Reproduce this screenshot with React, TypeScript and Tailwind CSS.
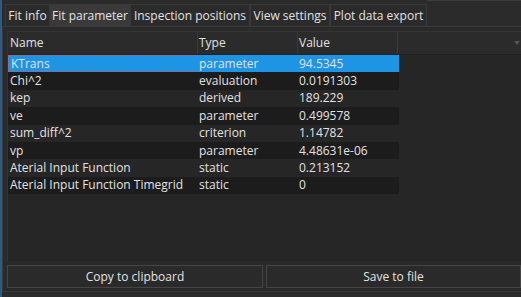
import React from "react";

const rows: [string, string, string][] = [
  ["KTrans", "parameter", "94.5345"],
  ["Chi^2", "evaluation", "0.0191303"],
  ["kep", "derived", "189.229"],
  ["ve", "parameter", "0.499578"],
  ["sum_diff^2", "criterion", "1.14782"],
  ["vp", "parameter", "4.48631e-06"],
  ["Aterial Input Function", "static", "0.213152"],
  ["Aterial Input Function Timegrid", "static", "0"],
];

const tabs: { label: string; w: string; sel?: boolean }[] = [
  { label: "Fit info", w: "w-[45px]" },
  { label: "Fit parameter", w: "w-[80px]", sel: true },
  { label: "Inspection positions", w: "w-[120px]" },
  { label: "View settings", w: "w-[80px]" },
  { label: "Plot data export", w: "w-[97px]" },
];

export default function App() {
  return (
    <div
      className="w-[521px] h-[297px] bg-[#2b2b2b] flex overflow-hidden text-[12px] text-[#e2e2e2] leading-none"
      style={{ fontFamily: '"Open Sans", "Noto Sans", sans-serif' }}
    >
      <div className="w-[2px] h-full bg-[#2c5b88]" />
      <div className="flex-1 flex flex-col min-w-0">
        {/* tab bar */}
        <div className="h-[26px] flex shrink-0">
          <div className="w-[3px]" />
          <div className="flex pt-[4px]">
            {tabs.map((t) => (
              <div
                key={t.label}
                className={`${t.w} h-[22px] flex items-center justify-center border border-b-0 border-[#393939] whitespace-nowrap ${
                  t.sel ? "bg-[#3a3a3a]" : "bg-[#2b2b2b]"
                }`}
              >
                {t.label}
              </div>
            ))}
          </div>
          <div className="flex-1 border-t border-[#3c3c3c]" />
        </div>
        {/* pane */}
        <div className="h-[266px] border-t border-b border-l border-[#3a3a3a] bg-[#2a2a2a] flex flex-col pl-[4px] pt-[4px] shrink-0">
          <div className="flex-1 bg-[#262626] border-l border-t border-[#353535] flex flex-col">
            {/* header */}
            <div className="h-[23px] flex bg-[#2b2b2b] border-b border-[#222] shrink-0">
              <div className="w-[190px] pl-[2px] flex items-center border-r border-[#3a3a3a]">Name</div>
              <div className="w-[100px] pl-[1px] flex items-center border-r border-[#3a3a3a]">Type</div>
              <div className="w-[100px] pl-[1px] flex items-center border-r border-[#3a3a3a]">Value</div>
              <div className="flex-1 flex items-center justify-end pr-[1px]">
                <svg width="6" height="4" viewBox="0 0 6 4">
                  <path d="M0 0 L6 0 L3 4 Z" fill="#555" />
                </svg>
              </div>
            </div>
            {rows.map((r, i) => {
              const sel = i === 0;
              const bg = sel ? "bg-[#1e94e4]" : i % 2 === 1 ? "bg-[#1c1c1c]" : "bg-[#262626]";
              return (
                <div key={r[0]} className={`h-[17.4px] w-[391px] flex items-center ${bg} shrink-0`}>
                  <div
                    className={`w-[190px] h-full pl-[2px] flex items-center whitespace-nowrap ${
                      sel ? "border border-dashed border-[#b06070]" : ""
                    }`}
                  >
                    {r[0]}
                  </div>
                  <div className="w-[100px] pl-[1px] whitespace-nowrap">{r[1]}</div>
                  <div className="w-[100px] pl-[1px] whitespace-nowrap">{r[2]}</div>
                </div>
              );
            })}
          </div>
          {/* buttons */}
          <div className="h-[23px] flex gap-[3px] mt-[4px] mb-[3px] shrink-0">
            <div className="w-[256px] h-full flex items-center justify-center bg-[#2a2a2a] border border-[#454545]">
              Copy to clipboard
            </div>
            <div className="flex-1 h-full flex items-center justify-center bg-[#2a2a2a] border border-[#454545]">
              Save to file
            </div>
          </div>
        </div>
      </div>
    </div>
  );
}
